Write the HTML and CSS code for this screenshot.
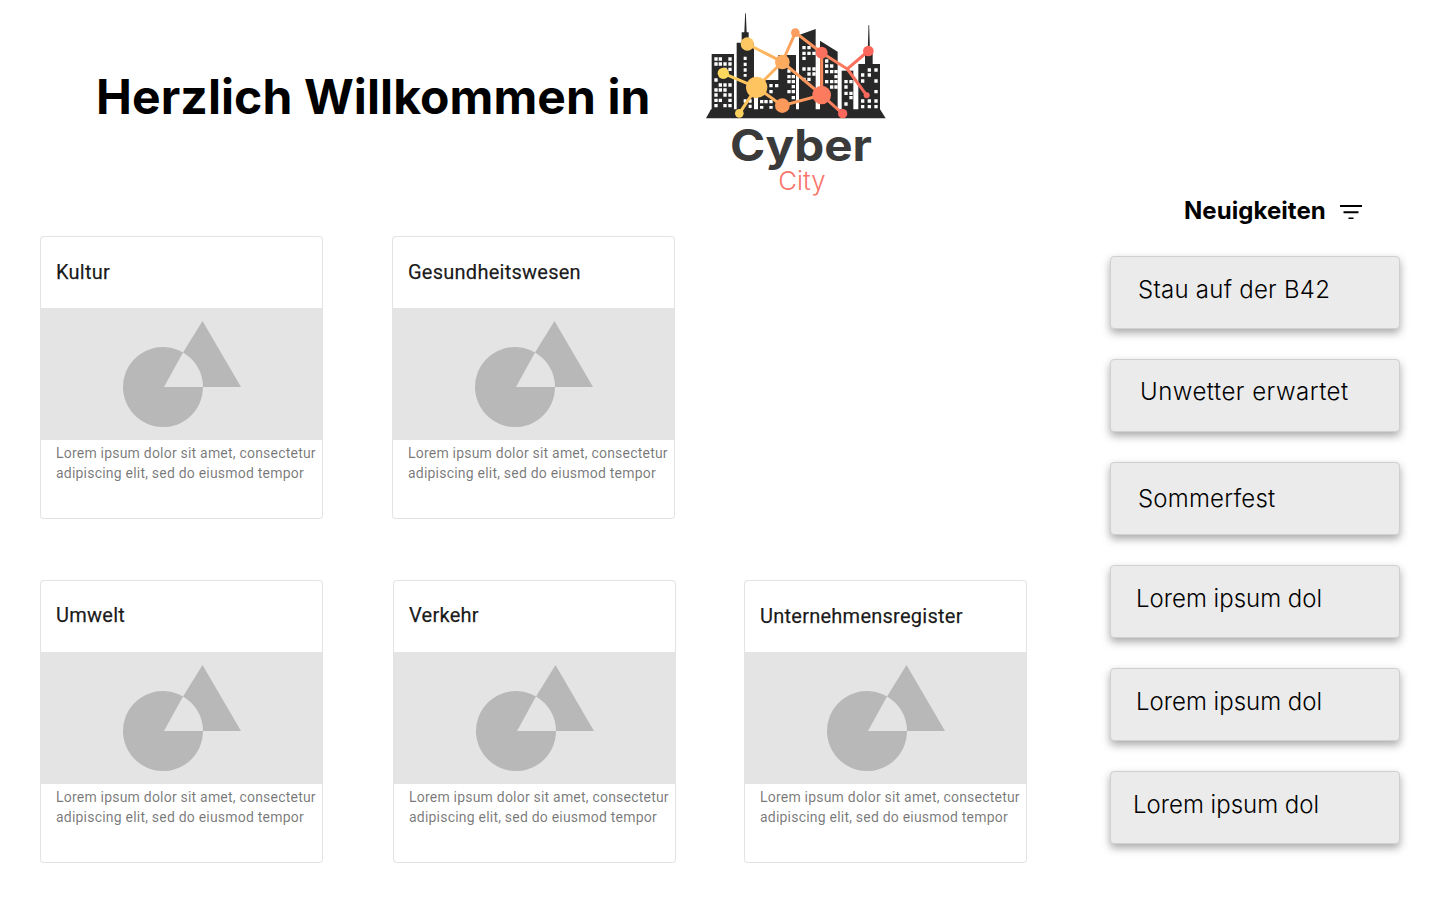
FILE: index.html
```html
<!DOCTYPE html>
<html lang="de">
<head>
<meta charset="utf-8">
<title>Cyber City</title>
<link rel="stylesheet" href="styles.css">
</head>
<body>
<svg class="defs" width="0" height="0" aria-hidden="true">
  <symbol id="ph" viewBox="0 0 118 106">
    <path fill="#b8b8b8" d="M80 66A40 40 0 1 1 60 31.4L41 66Z"/>
    <path fill="#b8b8b8" d="M79.500 0L118 66H80A40 40 0 0 0 60 31.400Z"/>
  </symbol>
</svg>
<header class="top">
  <h1 class="title">Herzlich Willkommen in</h1>
  <svg class="logo" viewBox="0 0 630 600" width="210" height="200">
    <defs>
      <linearGradient id="net" gradientUnits="userSpaceOnUse" x1="100" y1="0" x2="535" y2="0">
        <stop offset="0" stop-color="#ffd75e"/>
        <stop offset="1" stop-color="#f9655c"/>
      </linearGradient>
    </defs>
    <g fill="#282828">
      <path d="M48 355L63 328H570L587 355Z"/>
      <rect x="65" y="162" width="67" height="170"/>
      <path d="M140 332V128H155V97H163L165.500 40L167.500 40L170 97H176V128H192V332Z"/>
      <path d="M204 332V240H265V165H318V332Z"/>
      <path d="M327 332V105L377 87V332Z"/>
      <path d="M390 332V122L443 155V332Z"/>
      <path d="M455 332V212H490V332Z"/>
      <path d="M505 332V192H525V160H533L535.500 75L537.500 75L540 160H548V192H570V332Z"/>
    </g>
    <path fill="#fff" d="M73 172h10v10h-10zM86 172h10v10h-10zM115 172h10v10h-10zM73 187h10v10h-10zM86 187h10v10h-10zM100 187h10v10h-10zM115 187h10v10h-10zM100 203h10v10h-10zM115 203h10v10h-10zM73 235h10v10h-10zM86 250h10v10h-10zM100 250h10v10h-10zM115 250h10v10h-10zM73 265h10v10h-10zM86 265h10v10h-10zM100 265h10v10h-10zM73 280h10v10h-10zM100 280h10v10h-10zM115 280h10v10h-10zM73 296h10v10h-10zM86 296h10v10h-10zM115 296h10v10h-10zM73 312h10v10h-10zM100 312h10v10h-10zM115 312h10v10h-10z"/>
    <path fill="#fff" d="M161 170h9v10h-9zM161 188h9v10h-9zM161 205h9v10h-9zM161 222h9v8h-9zM161 298h9v10h-9zM176 298h9v10h-9zM176 314h9v10h-9z"/>
    <path fill="#fff" d="M238 252h10v10h-10zM255 252h10v10h-10zM238 270h10v10h-10zM210 300h10v10h-10zM223 300h10v10h-10zM238 300h10v10h-10zM210 318h10v8h-10zM238 318h10v8h-10zM292 208h10v10h-10zM292 225h10v10h-10zM305 225h10v10h-10zM292 240h10v10h-10zM305 240h10v10h-10zM305 255h10v10h-10zM292 270h10v10h-10zM305 270h10v10h-10zM305 288h10v10h-10z"/>
    <path fill="#fff" d="M337 138h10v10h-10zM352 138h10v10h-10zM337 155h10v10h-10zM352 155h10v10h-10zM367 155h10v10h-10zM337 170h10v10h-10zM337 202h10v10h-10zM352 202h10v10h-10zM367 202h10v10h-10zM352 217h10v10h-10zM367 217h10v10h-10zM337 233h10v10h-10zM352 233h10v10h-10z"/>
    <path fill="#fff" d="M405 178h10v10h-10zM420 193h10v10h-10zM405 193h10v10h-10zM405 210h10v10h-10zM420 210h10v10h-10zM433 210h10v10h-10zM433 225h10v10h-10zM405 240h10v10h-10zM420 240h10v10h-10zM433 240h10v10h-10zM420 256h10v10h-10zM433 256h10v10h-10z"/>
    <path fill="#fff" d="M463 240h10v10h-10zM478 240h10v10h-10zM463 256h10v10h-10zM478 275h10v10h-10zM463 275h10v10h-10zM478 288h10v10h-10zM463 307h10v10h-10z"/>
    <path fill="#fff" d="M533 205h10v10h-10zM553 205h10v10h-10zM513 220h10v10h-10zM533 220h10v10h-10zM553 238h10v10h-10zM513 238h10v10h-10zM553 270h10v10h-10zM513 298h10v10h-10zM533 298h10v10h-10zM553 298h10v10h-10zM513 315h10v10h-10zM533 315h10v10h-10zM553 315h10v10h-10z"/>
    <path stroke="url(#net)" stroke-width="9" fill="none" d="M100 220L200 262L148 340M200 262L277 186L172 132M277 186L316 98L395 158L472 207L535 153M472 207L530 286M395 158V285L277 186M395 285L458 341M200 262L277 317L395 285"/>
    <circle cx="100" cy="220" r="17" fill="#ffd95e"/>
    <circle cx="172" cy="132" r="20" fill="#fdc864"/>
    <circle cx="200" cy="262" r="32" fill="#fec45f"/>
    <circle cx="148" cy="340" r="13" fill="#fdd15e"/>
    <circle cx="277" cy="186" r="22" fill="#fdac5f"/>
    <circle cx="277" cy="317" r="22" fill="#fc9a5c"/>
    <circle cx="316" cy="98" r="13" fill="#fb9d5f"/>
    <circle cx="395" cy="285" r="28" fill="#fc7a5e"/>
    <circle cx="395" cy="158" r="18" fill="#fb6f5e"/>
    <circle cx="458" cy="341" r="14" fill="#fa675c"/>
    <circle cx="535" cy="153" r="16" fill="#fa655c"/>
    <circle cx="530" cy="286" r="9" fill="#f9685c"/>
    <text class="logo-main" x="120" y="484" textLength="426" lengthAdjust="spacingAndGlyphs">Cyber</text>
    <text class="logo-sub" x="265" y="570" textLength="142" lengthAdjust="spacingAndGlyphs">City</text>
  </svg>
</header>
<main class="content">
  <section class="cards">
    <article class="card">
      <h2 class="card-title">Kultur</h2>
      <div class="card-media"><svg class="ph"><use href="#ph"/></svg></div>
      <p class="card-text">Lorem ipsum dolor sit amet, consectetur adipiscing elit, sed do eiusmod tempor</p>
    </article>
    <article class="card">
      <h2 class="card-title">Gesundheitswesen</h2>
      <div class="card-media"><svg class="ph"><use href="#ph"/></svg></div>
      <p class="card-text">Lorem ipsum dolor sit amet, consectetur adipiscing elit, sed do eiusmod tempor</p>
    </article>
    <div class="empty"></div>
    <article class="card lower">
      <h2 class="card-title">Umwelt</h2>
      <div class="card-media"><svg class="ph"><use href="#ph"/></svg></div>
      <p class="card-text">Lorem ipsum dolor sit amet, consectetur adipiscing elit, sed do eiusmod tempor</p>
    </article>
    <article class="card lower nudge-x">
      <h2 class="card-title">Verkehr</h2>
      <div class="card-media"><svg class="ph"><use href="#ph"/></svg></div>
      <p class="card-text">Lorem ipsum dolor sit amet, consectetur adipiscing elit, sed do eiusmod tempor</p>
    </article>
    <article class="card">
      <h2 class="card-title">Unternehmensregister</h2>
      <div class="card-media"><svg class="ph"><use href="#ph"/></svg></div>
      <p class="card-text">Lorem ipsum dolor sit amet, consectetur adipiscing elit, sed do eiusmod tempor</p>
    </article>
  </section>
  <aside class="news">
    <div class="news-head">
      <span class="news-title">Neuigkeiten</span>
      <svg class="filter" viewBox="0 0 22 14" width="22" height="14"><path d="M0 0h22v2H0zM3.500 6.200h15v2h-15zM8.500 12.400h5v2h-5z" fill="#000"/></svg>
    </div>
    <div class="news-list">
      <div class="news-item i1">Stau auf der B42</div>
      <div class="news-item i2">Unwetter erwartet</div>
      <div class="news-item i3">Sommerfest</div>
      <div class="news-item i4">Lorem ipsum dol</div>
      <div class="news-item i5">Lorem ipsum dol</div>
      <div class="news-item i6">Lorem ipsum dol</div>
    </div>
  </aside>
</main>
</body>
</html>
```
FILE: styles.css
```css
* { box-sizing: border-box; }
html, body { margin: 0; padding: 0; }
body { width: 1440px; height: 900px; overflow: hidden; background: #fff; font-family: "Inter", sans-serif; color: #000; }
.defs { position: absolute; }
.top { display: flex; align-items: flex-start; height: 236px; padding-left: 96px; }
.title { margin: 66px 0 0; font: 700 48px/62px "Inter", sans-serif; letter-spacing: .1px; white-space: nowrap; width: 594px; }
.logo { display: block; flex: none; }
.content { display: flex; align-items: flex-start; padding-left: 40px; }
.cards { display: grid; grid-template-columns: repeat(3, 283px); grid-auto-rows: 283px; column-gap: 69px; row-gap: 61px; width: 1070px; }
.card { border: 1px solid rgba(0,0,0,.11); border-radius: 4px; overflow: hidden; background: #fff; }
.nudge-x { margin-left: 1px; margin-right: -1px; }
.card-title { margin: 0; height: 71px; padding: 21px 15px 0; font: 400 20px/28px "Roboto", sans-serif; letter-spacing: .25px; -webkit-text-stroke: .25px rgba(0,0,0,.8); color: rgba(0,0,0,.9); }
.lower .card-title { padding-top: 20px; }
.card-media { height: 132px; background: #e4e4e4; display: flex; justify-content: center; padding-top: 13px; }
.ph { width: 118px; height: 106px; }
.card-text { margin: 0; padding: 3px 0 0 15px; font: 400 14px/20px "Roboto", sans-serif; letter-spacing: .21px; color: rgba(0,0,0,.54); width: 282px; }
.news { width: 290px; }
.news-head { display: flex; align-items: center; margin: -40px 0 0 74px; height: 30px; }
.news-title { font: 700 24px/30px "Inter", sans-serif; letter-spacing: .05px; }
.filter { margin: 2px 0 0 14px; }
.news-list { display: flex; flex-direction: column; gap: 30px; margin-top: 30px; }
.news-item { height: 73px; background: #ebebeb; border: 1px solid #d0d0d0; border-radius: 4px; box-shadow: 0 4px 9px rgba(0,0,0,.34); font: 300 24px/30px "Inter", sans-serif; letter-spacing: .26px; color: #000; white-space: nowrap; }
.i1 { padding: 18px 0 0 27px; }
.i2 { padding: 17px 0 0 29px; letter-spacing: .5px; }
.i3 { padding: 21px 0 0 27px; letter-spacing: .2px; }
.i4 { padding: 18px 0 0 25px; letter-spacing: 0; }
.i5 { padding: 18px 0 0 25px; letter-spacing: 0; }
.i6 { padding: 18px 0 0 22px; letter-spacing: 0; }
.logo-main { font: 700 130px "Inter", sans-serif; fill: #3a3a3a; }
.logo-sub { font: 300 78px "Inter", sans-serif; fill: #f9746a; }
```
